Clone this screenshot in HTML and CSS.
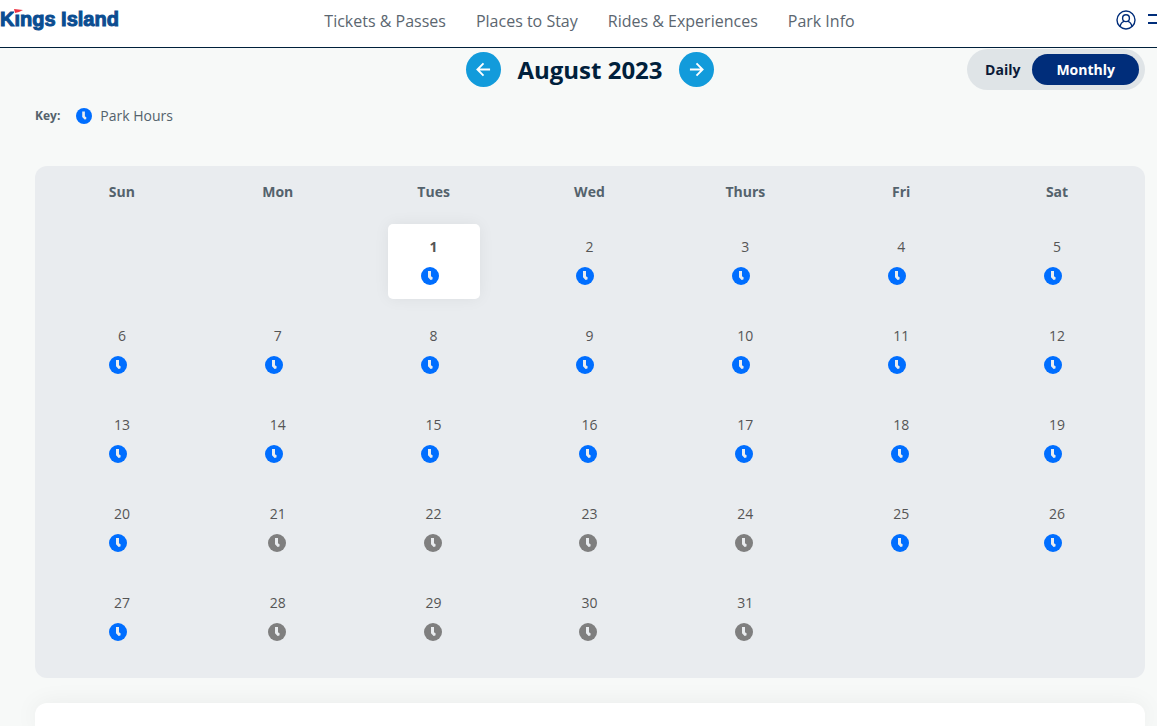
FILE: index.html
```html
<!DOCTYPE html>
<html lang="en">
<head>
<meta charset="utf-8">
<meta name="viewport" content="width=device-width, initial-scale=1">
<title>Kings Island Park Hours</title>
<link rel="stylesheet" href="styles.css">
</head>
<body>
<svg class="sprite" aria-hidden="true">
  <symbol id="clock" viewBox="0 0 18 18">
    <circle cx="9" cy="9" r="9" fill="currentColor"/>
    <path class="hand" d="M7 4H10V9.2L11.7 10.6L11.4 12.6L9.6 13L7 10.2Z"/>
  </symbol>
</svg>
<header class="site-header">
  <a class="logo" href="#">Kings Island<svg class="flag" viewBox="0 0 10 5" aria-hidden="true"><path d="M0 0H10V5H0Z" fill="#fff"/><path d="M0 0L9 1L5 3L1 4Z" fill="#ee3444"/></svg></a>
  <nav class="main-nav">
    <a href="#">Tickets &amp; Passes</a>
    <a href="#">Places to Stay</a>
    <a href="#">Rides &amp; Experiences</a>
    <a href="#">Park Info</a>
  </nav>
  <div class="tools">
    <button class="icon-button" type="button" aria-label="Account">
      <svg class="account" viewBox="0 0 20 20" fill="none" stroke="currentColor" stroke-width="1.4"><circle cx="10" cy="10" r="9"/><circle cx="10" cy="8.2" r="3.4"/><path d="M4 16.5C4.6 13.5 6.5 11.8 8.2 11.3M16 16.5C15.4 13.5 13.5 11.8 11.8 11.3"/></svg>
    </button>
    <button class="icon-button" type="button" aria-label="Menu">
      <svg class="menu" viewBox="0 0 20 20" fill="none" stroke="currentColor" stroke-width="2"><path d="M0 5H20M0 13H20"/></svg>
    </button>
  </div>
</header>
<main class="page">
  <div class="toolbar">
    <div class="month">
      <button class="arrow" type="button" aria-label="Previous month"><svg viewBox="0 0 16 16"><path d="M15 8H2M8 1.5L1.5 8L8 14.5"/></svg></button>
      <h1>August 2023</h1>
      <button class="arrow" type="button" aria-label="Next month"><svg viewBox="0 0 16 16"><path d="M1 8H14M8 1.5L14.5 8L8 14.5"/></svg></button>
    </div>
    <div class="toggle">
      <button type="button">Daily</button>
      <button class="active" type="button">Monthly</button>
    </div>
  </div>
  <div class="key"><strong>Key:</strong><svg class="key-icon"><use href="#clock"/></svg><span>Park Hours</span></div>
  <section class="panel">
    <table class="calendar">
      <thead>
        <tr><th>Sun</th><th>Mon</th><th>Tues</th><th>Wed</th><th>Thurs</th><th>Fri</th><th>Sat</th></tr>
      </thead>
      <tbody>
        <tr>
          <td></td>
          <td></td>
          <td><div class="day today">1<svg class="open"><use href="#clock"/></svg></div></td>
          <td><div class="day">2<svg class="open"><use href="#clock"/></svg></div></td>
          <td><div class="day">3<svg class="open"><use href="#clock"/></svg></div></td>
          <td><div class="day">4<svg class="open"><use href="#clock"/></svg></div></td>
          <td><div class="day">5<svg class="open"><use href="#clock"/></svg></div></td>
        </tr>
        <tr>
          <td><div class="day">6<svg class="open"><use href="#clock"/></svg></div></td>
          <td><div class="day">7<svg class="open"><use href="#clock"/></svg></div></td>
          <td><div class="day">8<svg class="open"><use href="#clock"/></svg></div></td>
          <td><div class="day">9<svg class="open"><use href="#clock"/></svg></div></td>
          <td><div class="day">10<svg class="open"><use href="#clock"/></svg></div></td>
          <td><div class="day">11<svg class="open"><use href="#clock"/></svg></div></td>
          <td><div class="day">12<svg class="open"><use href="#clock"/></svg></div></td>
        </tr>
        <tr>
          <td><div class="day">13<svg class="open"><use href="#clock"/></svg></div></td>
          <td><div class="day">14<svg class="open"><use href="#clock"/></svg></div></td>
          <td><div class="day">15<svg class="open"><use href="#clock"/></svg></div></td>
          <td><div class="day">16<svg class="open single"><use href="#clock"/></svg></div></td>
          <td><div class="day">17<svg class="open single"><use href="#clock"/></svg></div></td>
          <td><div class="day">18<svg class="open single"><use href="#clock"/></svg></div></td>
          <td><div class="day">19<svg class="open"><use href="#clock"/></svg></div></td>
        </tr>
        <tr>
          <td><div class="day">20<svg class="open"><use href="#clock"/></svg></div></td>
          <td><div class="day">21<svg class="closed single"><use href="#clock"/></svg></div></td>
          <td><div class="day">22<svg class="closed single"><use href="#clock"/></svg></div></td>
          <td><div class="day">23<svg class="closed single"><use href="#clock"/></svg></div></td>
          <td><div class="day">24<svg class="closed single"><use href="#clock"/></svg></div></td>
          <td><div class="day">25<svg class="open single"><use href="#clock"/></svg></div></td>
          <td><div class="day">26<svg class="open"><use href="#clock"/></svg></div></td>
        </tr>
        <tr>
          <td><div class="day">27<svg class="open"><use href="#clock"/></svg></div></td>
          <td><div class="day">28<svg class="closed single"><use href="#clock"/></svg></div></td>
          <td><div class="day">29<svg class="closed single"><use href="#clock"/></svg></div></td>
          <td><div class="day">30<svg class="closed single"><use href="#clock"/></svg></div></td>
          <td><div class="day">31<svg class="closed single"><use href="#clock"/></svg></div></td>
          <td></td>
          <td></td>
        </tr>
      </tbody>
    </table>
  </section>
  <section class="details"></section>
</main>
</body>
</html>
```
FILE: styles.css
```css
* { box-sizing: border-box; }
body {
  display: flex;
  flex-direction: column;
  min-height: 100vh;
  margin: 0;
  background: #f7f9f8;
  color: #54626c;
  font-family: "Open Sans", sans-serif;
  font-size: 14px;
  line-height: 20px;
}
button {
  border: 0;
  padding: 0;
  background: none;
  color: inherit;
  font: inherit;
  cursor: pointer;
}
.sprite { position: absolute; width: 0; height: 0; }
.hand { fill: #e9ecef; }

.site-header {
  display: grid;
  grid-template-columns: 1fr auto 1fr;
  align-items: start;
  height: 48px;
  overflow: hidden;
  background: #fff;
  border-bottom: 1px solid #00203b;
}
.logo {
  position: relative;
  justify-self: start;
  padding-top: 5px;
  color: #0b4d91;
  font: bold 20px/28px "Liberation Sans", Arial, sans-serif;
  -webkit-text-stroke: 1px #0b4d91;
  text-decoration: none;
}
.flag { position: absolute; left: 14px; top: 9px; width: 10px; height: 5px; }
.main-nav { display: flex; gap: 30px; padding: 11px 0 0 22px; }
.main-nav a { color: #5b6670; font-size: 16px; text-decoration: none; }
.tools {
  display: flex;
  justify-self: end;
  gap: 12px;
  margin-right: -11px;
  padding-top: 10px;
  color: #002d7a;
}
.icon-button { display: flex; }
.account, .menu { width: 20px; height: 20px; }

.page {
  flex: 1;
  display: flex;
  flex-direction: column;
  padding: 1px 12px 0 35px;
}
.toolbar {
  display: grid;
  grid-template-columns: 1fr auto 1fr;
  align-items: center;
}
.month { grid-column: 2; display: flex; align-items: center; gap: 16px; }
.month h1 { margin: 0; color: #00203b; font-size: 24px; line-height: 34px; }
.arrow {
  display: grid;
  place-items: center;
  width: 35px;
  height: 35px;
  border-radius: 50%;
  background: #129bdb;
}
.arrow svg {
  width: 15px;
  height: 15px;
  fill: none;
  stroke: #fff;
  stroke-width: 2;
}
.toggle {
  justify-self: end;
  display: flex;
  padding: 5px 6px;
  border-radius: 21px;
  background: #dfe4e7;
  color: #0b1a38;
  font-weight: bold;
}
.toggle button { padding: 0 12px; line-height: 31px; }
.toggle .active { padding: 0 24px; border-radius: 16px; background: #002d7a; color: #fff; }

.key { display: flex; align-items: center; margin-top: 16px; }
.key strong { font-size: 12px; }
.key-icon { width: 16px; height: 16px; margin: 0 8px 0 16px; color: #006eff; }

.panel { margin-top: 40px; padding: 8px 10px 23px 9px; border-radius: 12px; background: #e9ecef; }
.calendar { width: 100%; table-layout: fixed; border-collapse: collapse; }
.calendar th { height: 36px; padding: 0; }
.calendar td { height: 89px; padding: 0; vertical-align: bottom; }
.day {
  display: flex;
  flex-direction: column;
  align-items: center;
  gap: 10px;
  width: 92px;
  height: 75px;
  margin: 0 auto;
  padding-top: 13px;
  border-radius: 5px;
  color: #555;
}
.today { background: #fff; font-weight: bold; box-shadow: 0 0 16px rgba(0, 0, 0, .06); }
.day svg { width: 18px; height: 18px; margin-right: 8px; }
.day .single { margin-right: 2px; }
.open { color: #006eff; }
.closed { color: #7f7f7f; }

.details {
  flex: 1;
  margin-top: 25px;
  border-radius: 12px 12px 0 0;
  background: #fff;
  box-shadow: 0 0 25px rgba(0, 0, 0, .06);
}
```
